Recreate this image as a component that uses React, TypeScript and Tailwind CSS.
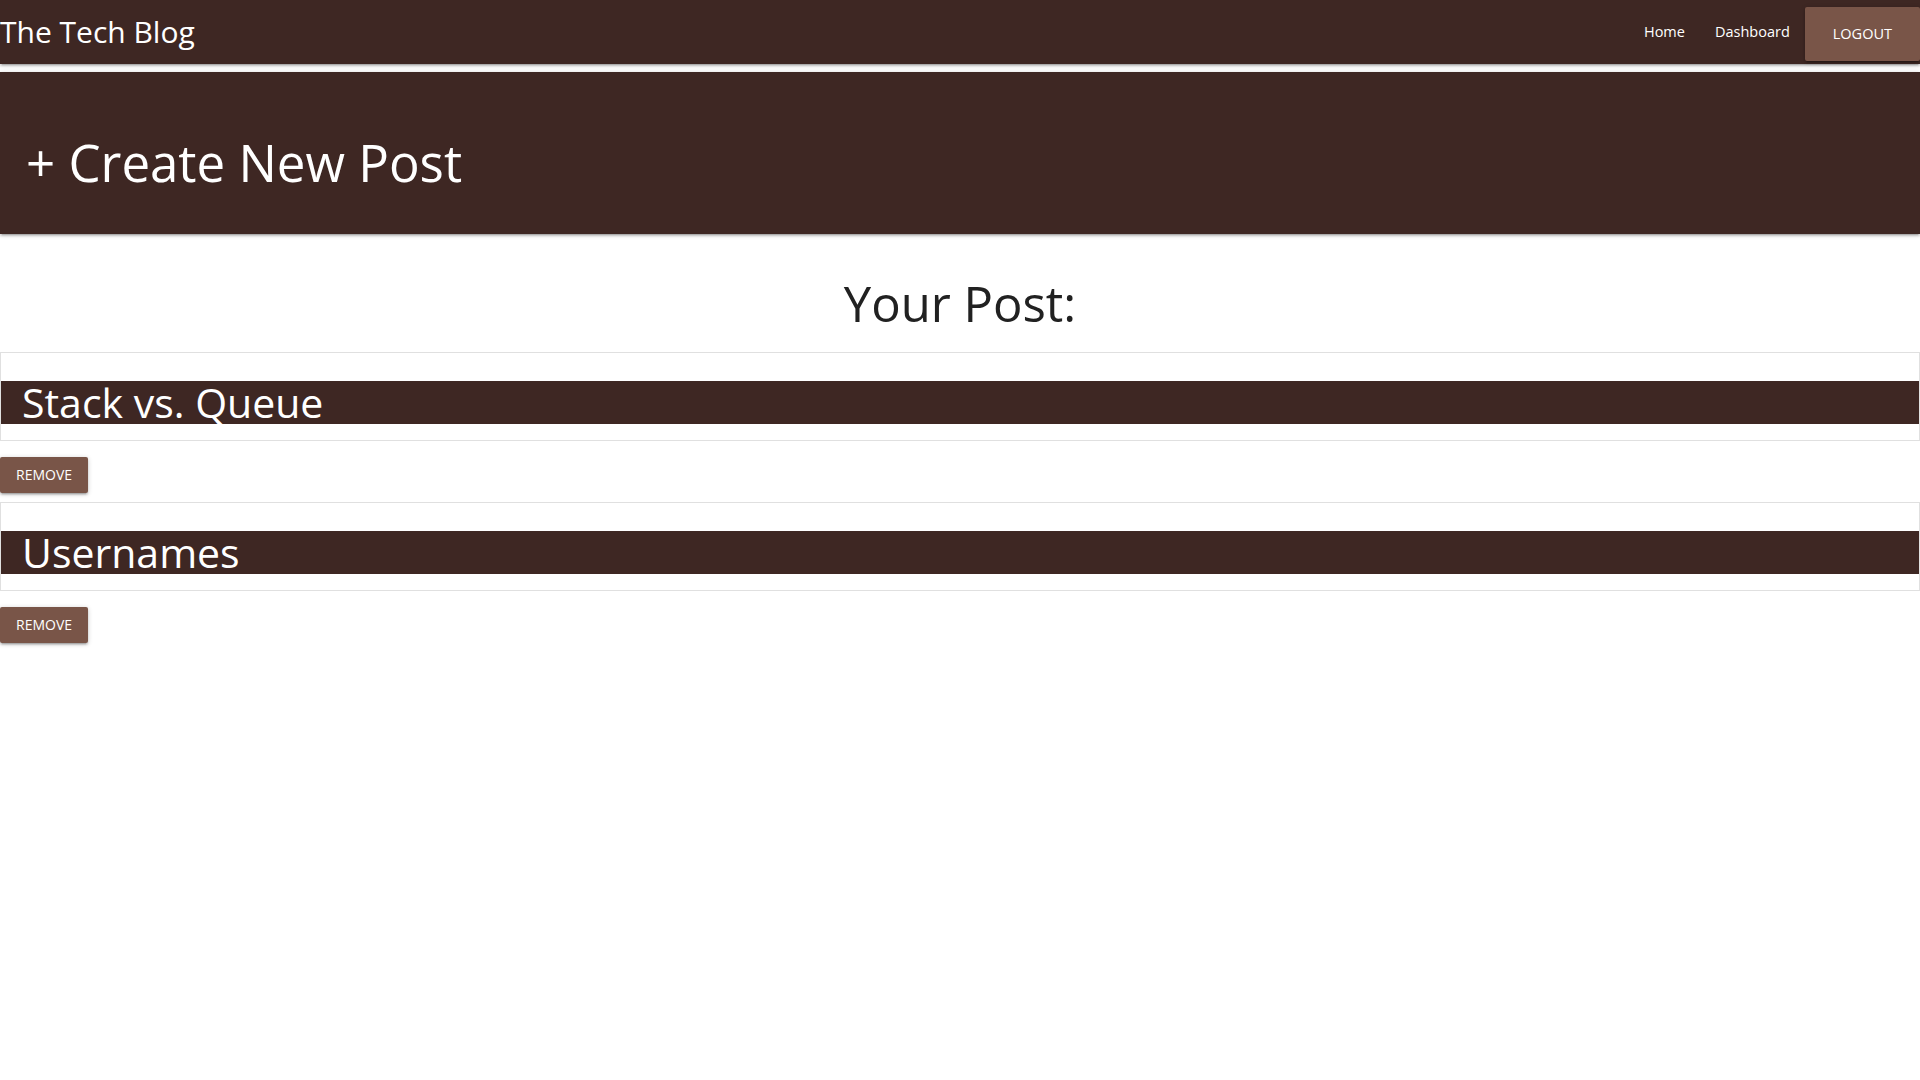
import React from 'react';

const shadow =
  'shadow-[0_2px_2px_0_rgba(0,0,0,0.14),0_3px_1px_-2px_rgba(0,0,0,0.12),0_1px_5px_0_rgba(0,0,0,0.2)]';

const posts = [
  { id: 1, title: 'Stack vs. Queue' },
  { id: 2, title: 'Usernames' },
];

const PostCard: React.FC<{ title: string; first: boolean }> = ({ title, first }) => (
  <div className={first ? '' : 'mt-[9px]'}>
    <div className="border border-[#e0e0e0] pt-[28px] pb-[16px]">
      <div className="h-[43px] bg-[#3e2723] pl-[21px] text-white text-[41px] leading-[43px] whitespace-nowrap">
        {title}
      </div>
    </div>
    <button
      className={`mt-[16px] h-[36px] px-4 rounded-[2px] bg-[#795548] text-white text-[14px] leading-[36px] uppercase ${shadow}`}
    >
      Remove
    </button>
  </div>
);

export default function App() {
  return (
    <div className="min-h-screen bg-white font-['Open_Sans',sans-serif]">
      {/* top navbar */}
      <nav className={`h-[64px] bg-[#3e2723] text-white flex justify-between ${shadow}`}>
        <a className="text-[30px] leading-[64px] whitespace-nowrap">The Tech Blog</a>
        <div className="flex items-start">
          <a className="px-[15px] text-[14.5px] leading-[64px]">Home</a>
          <a className="px-[15px] text-[14.5px] leading-[64px]">Dashboard</a>
          <button className={`mt-[7px] h-[54px] px-[28px] rounded-[2px] bg-[#795548] text-white text-[14.5px] leading-[54px] ${shadow}`}>
            LOGOUT
          </button>
        </div>
      </nav>

      {/* create new post banner */}
      <div className={`mt-[8px] h-[162px] bg-[#3e2723] text-white pt-[65px] pl-[26px] ${shadow}`}>
        <h2 className="text-[51px] leading-none whitespace-nowrap">+ Create New Post</h2>
      </div>

      <div className="pt-[45px] pb-[24px] text-center">
        <h2 className="text-[49px] leading-none text-[#212121]">Your Post:</h2>
      </div>

      <div>
        {posts.map((p, i) => (
          <PostCard key={p.id} title={p.title} first={i === 0} />
        ))}
      </div>
    </div>
  );
}
